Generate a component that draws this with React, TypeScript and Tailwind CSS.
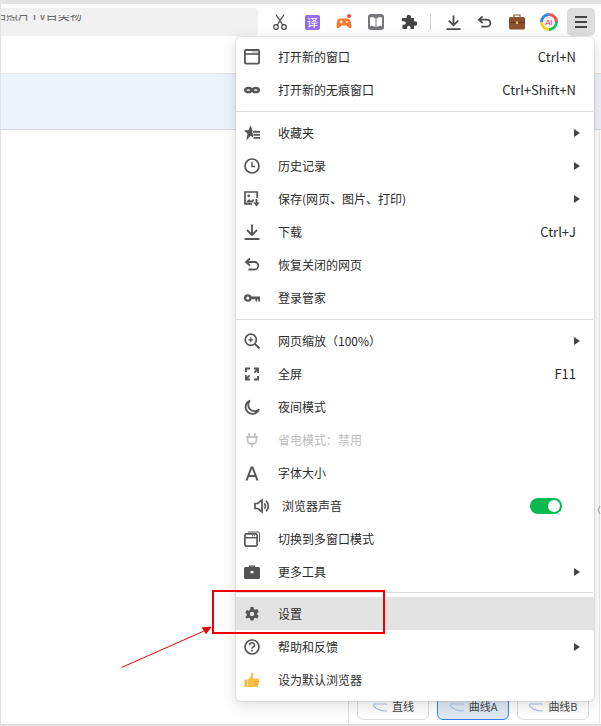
import { FC, ReactNode } from 'react';

const C = '#555555';

const WindowIcon = () => (
  <svg width="16" height="16" viewBox="0 0 16 16" fill="none">
    <rect x="0.900" y="1" width="14.200" height="13.600" rx="1" stroke={C} strokeWidth="1.800" />
    <path d="M1 5h14" stroke={C} strokeWidth="1.600" />
    <path d="M8.500 3h1M10.500 3h1M12.500 3h1" stroke={C} strokeWidth="1" />
  </svg>
);
const MaskIcon = () => (
  <svg width="16" height="16" viewBox="0 0 16 16" fill="none" stroke={C} strokeWidth="2.500">
    <ellipse cx="4.300" cy="8" rx="3" ry="2.100" />
    <ellipse cx="11.700" cy="8" rx="3" ry="2.100" />
  </svg>
);
const StarListIcon = () => (
  <svg width="16" height="16" viewBox="0 0 16 16" fill={C}>
    <path d="M6.500 0.300L8.400 5 13.300 5.300 9.500 8.500 10.700 13.500 6.500 10.800 2.300 15.500 3.500 8.700 0 5.500 4.600 5z" />
    <path d="M8.300 5.300H16v3H8.300zM9 8.300h7v3H9zM9 11.300h7v3H9z" fill="#ffffff" />
    <path d="M9 6h7v1.700H9zM9.500 9H16v1.700H9.500zM9.500 12H16v1.700H9.500z" />
  </svg>
);
const ClockIcon = () => (
  <svg width="16" height="16" viewBox="0 0 16 16" fill="none" stroke={C}>
    <circle cx="8" cy="8" r="7" strokeWidth="1.700" />
    <path d="M8 3.800V8.500H11.200" strokeWidth="1.400" />
  </svg>
);
const SaveImageIcon = () => (
  <svg width="16" height="16" viewBox="0 0 16 16" fill="none">
    <path d="M8 12.800H1V1h12.200v6" stroke={C} strokeWidth="1.700" />
    <path d="M2 11.500l3-3.500 2 2 2-2 1 1-1 2.500H2z" fill={C} />
    <circle cx="4.700" cy="4.800" r="1.400" fill={C} />
    <path d="M12.500 8v4.500" stroke={C} strokeWidth="1.900" />
    <path d="M9.300 11.500h6.400L12.500 15.500z" fill={C} />
  </svg>
);
const DownloadIcon = () => (
  <svg width="16" height="16" viewBox="0 0 16 16" fill="none" stroke={C} strokeWidth="1.800">
    <path d="M8 0.500v10M3 6l5 5 5-5M0.500 15h15" />
  </svg>
);
const UndoIcon = () => (
  <svg width="16" height="16" viewBox="0 0 16 16" fill="none" stroke={C} strokeWidth="1.800">
    <path d="M6 1.500L2 5l4 3.500M2 5h8.500a3.700 3.700 0 010 7.500H4.500" />
  </svg>
);
const KeyIcon = () => (
  <svg width="16" height="16" viewBox="0 0 16 16" fill="none">
    <circle cx="3.800" cy="8" r="2.700" stroke={C} strokeWidth="2.300" />
    <path d="M6.500 6.400H16v5h-1.800V9.300h-1v2.100h-1.700V9.300H6.500z" fill={C} />
  </svg>
);
const ZoomIcon = () => (
  <svg width="16" height="16" viewBox="0 0 16 16" fill="none" stroke={C}>
    <circle cx="6.800" cy="6.800" r="5.600" strokeWidth="1.700" />
    <path d="M11 11l4.500 4.500" strokeWidth="2" />
    <path d="M4.300 6.800h5M6.800 4.300v5" strokeWidth="1.300" />
  </svg>
);
const FullscreenIcon = () => (
  <svg width="16" height="16" viewBox="0 0 16 16" fill={C}>
    <path d="M1 1.500h5v2H3V6H1zM15 1.500V7h-1.800V5L11 7.200 9.700 6l2.300-2.500h-2v-2zM1 14.500V9h1.800v2L5 8.800 6.300 10 4 12.500h2v2zM13 10h2v4.500h-5v-2h3z" />
  </svg>
);
const MoonIcon = () => (
  <svg width="16" height="16" viewBox="0 0 16 16" fill="none" stroke={C} strokeWidth="1.800">
    <path d="M6 1.500A6.900 6.900 0 1015 10.300 6.200 6.200 0 016 1.500z" />
  </svg>
);
const PlugIcon = () => (
  <svg width="16" height="16" viewBox="0 0 16 16" fill="none" stroke="#c4c4c4" strokeWidth="1.800">
    <path d="M5 1v4M11 1v4M2 5h12M3.500 5v3.300a4 4 0 004 3.500h1a4 4 0 004-3.500V5M8 12v3.500" />
  </svg>
);
const FontIcon = () => (
  <svg width="16" height="16" viewBox="0 0 16 16" fill={C}>
    <path d="M6.800 1.500h2.400L14.500 15.500h-2.200l-1.200-3.500H4.900l-1.200 3.500H1.500zM5.600 10h4.800L8 3.800z" />
  </svg>
);
const SoundIcon = () => (
  <svg width="16" height="16" viewBox="0 0 16 16" fill="none" stroke={C} strokeWidth="1.700">
    <path d="M1 5.500h2.700L8 2v12l-4.300-3.500H1z" />
    <path d="M10.300 5.300a3.600 3.600 0 010 5.400M12 2.800a7 7 0 010 10.400" />
  </svg>
);
const MultiWindowIcon = () => (
  <svg width="16" height="16" viewBox="0 0 16 16" fill="none" stroke={C}>
    <rect x="0.900" y="2.900" width="12.200" height="12.200" rx="1.500" strokeWidth="1.700" />
    <path d="M1 6.700h12" strokeWidth="1.400" />
    <path d="M4 1h10a1.500 1.500 0 011.500 1.500V11" strokeWidth="1" />
    <path d="M8 4.800h1M10 4.800h1" strokeWidth="1" />
  </svg>
);
const BriefcaseIcon = () => (
  <svg width="16" height="16" viewBox="0 0 16 16" fill={C}>
    <path
      fillRule="evenodd"
      d="M5 3V1.500h6V3h3.500c.8 0 1.500.7 1.500 1.500V13.500c0 .8-.7 1.500-1.500 1.500h-13C.7 15 0 14.300 0 13.500V4.500C0 3.700.7 3 1.500 3zM6.500 3h3V2.700h-3zM6.500 7v2.200h3V7z"
    />
  </svg>
);
const GearIcon = () => (
  <svg width="16" height="16" viewBox="0 0 16 16" fill={C}>
    <path
      fillRule="evenodd"
      d="M6.500 1h3l.4 2 1.300.8 2-.7 1.500 2.600-1.500 1.300v1.600l1.500 1.300-1.500 2.600-2-.7-1.300.8-.4 2h-3l-.4-2-1.300-.8-2 .7L1.300 10.900l1.500-1.300V8l-1.500-1.300 1.500-2.600 2 .7 1.300-.8zM8 5.800a2.200 2.200 0 100 4.400 2.200 2.200 0 000-4.400z"
    />
  </svg>
);
const HelpIcon = () => (
  <svg width="16" height="16" viewBox="0 0 16 16" fill="none" stroke={C}>
    <circle cx="8" cy="8" r="7" strokeWidth="1.700" />
    <path d="M5.500 6.300a2.500 2.500 0 115 0c0 1.500-2.500 1.800-2.500 3.500" strokeWidth="1.600" />
    <path d="M8 10.800v1.800" strokeWidth="1.700" />
  </svg>
);
const ThumbIcon = () => (
  <svg width="16" height="16" viewBox="0 0 16 16">
    <path d="M0.500 7.500h3v7.500h-3z" fill="#f5b83d" />
    <path d="M4 7.500l3-3.500.500-3.500c1.700 0 2 1.500 1.800 3L9 6.500h5c1 0 1.500 1 1.200 1.800L14 14c-.2.700-.8 1-1.500 1H4z" fill="#f7c04a" />
    <path d="M10 9.500h5M10 12h4.500" stroke="#e09a20" strokeWidth="0.800" />
  </svg>
);

const Arrow = () => (
  <span className="h-0 w-0 border-y-[4px] border-l-[6px] border-y-transparent border-l-[#444444]" />
);

const MenuItem: FC<{
  icon: ReactNode;
  label: string;
  shortcut?: string;
  arrow?: boolean;
  disabled?: boolean;
  active?: boolean;
  indent?: boolean;
  right?: ReactNode;
}> = ({ icon, label, shortcut, arrow, disabled, active, indent, right }) => (
  <div
    className={`flex h-[33px] items-center pl-2 pr-[14px] text-[12px] ${active ? 'bg-[#e3e3e3]' : ''} ${
      disabled ? 'text-[#bdbdbd]' : 'text-[#2b2b2b]'
    }`}
  >
    <span className={`flex w-[16px] shrink-0 justify-center ${indent ? 'ml-[10px]' : ''}`}>{icon}</span>
    <span className={`flex-1 ${indent ? 'ml-[12px]' : 'ml-[18px]'}`}>{label}</span>
    {shortcut && <span className="mr-[4px] text-[13px] text-[#2b2b2b]">{shortcut}</span>}
    {arrow && <Arrow />}
    {right}
  </div>
);

const Menu = () => (
  <div className="absolute left-[236px] top-[37px] w-[358px] rounded-[5px] bg-white pb-[5px] pt-[3px] shadow-[0_0_0_1px_rgba(0,0,0,0.08),0_4px_16px_rgba(0,0,0,0.14)]">
    <MenuItem icon={<WindowIcon />} label="打开新的窗口" shortcut="Ctrl+N" />
    <MenuItem icon={<MaskIcon />} label="打开新的无痕窗口" shortcut="Ctrl+Shift+N" />
    <div className="mb-[4px] mr-[1px] mt-[5px] h-px bg-[#dcdcdc]" />
    <MenuItem icon={<StarListIcon />} label="收藏夹" arrow />
    <MenuItem icon={<ClockIcon />} label="历史记录" arrow />
    <MenuItem icon={<SaveImageIcon />} label="保存(网页、图片、打印)" arrow />
    <MenuItem icon={<DownloadIcon />} label="下载" shortcut="Ctrl+J" />
    <MenuItem icon={<UndoIcon />} label="恢复关闭的网页" />
    <MenuItem icon={<KeyIcon />} label="登录管家" />
    <div className="mb-[4px] mr-[1px] mt-[5px] h-px bg-[#dcdcdc]" />
    <MenuItem icon={<ZoomIcon />} label="网页缩放（100%）" arrow />
    <MenuItem icon={<FullscreenIcon />} label="全屏" shortcut="F11" />
    <MenuItem icon={<MoonIcon />} label="夜间模式" />
    <MenuItem icon={<PlugIcon />} label="省电模式：禁用" disabled />
    <MenuItem icon={<FontIcon />} label="字体大小" />
    <MenuItem
      indent
      icon={<SoundIcon />}
      label="浏览器声音"
      right={
        <span className="mr-[18px] flex h-4 w-8 items-center justify-end rounded-full bg-[#0bb951] pr-[2px]">
          <span className="h-3 w-3 rounded-full bg-white" />
        </span>
      }
    />
    <MenuItem icon={<MultiWindowIcon />} label="切换到多窗口模式" />
    <MenuItem icon={<BriefcaseIcon />} label="更多工具" arrow />
    <div className="my-[4px] mr-[1px] h-px bg-[#dcdcdc]" />
    <MenuItem icon={<GearIcon />} label="设置" active />
    <MenuItem icon={<HelpIcon />} label="帮助和反馈" arrow />
    <MenuItem icon={<ThumbIcon />} label="设为默认浏览器" />
  </div>
);

const Toolbar = () => (
  <div className="mt-[4px] flex h-[28px] items-center">
    {/* address bar: only the lower half of its text shows in the capture */}
    <div className="h-[28px] w-[258px] shrink-0 overflow-hidden rounded-r-[4px] bg-[#f1f1f1] pt-[7px]">
      <div className="h-[6px] overflow-hidden">
        <div className="-ml-[6px] -mt-[6px] whitespace-nowrap text-[12px] leading-[12px] text-[#666666]">
          拍照片 I V目类物
        </div>
      </div>
    </div>
    <svg className="ml-[15px]" width="14" height="16" viewBox="0 0 14 16" fill="none" stroke="#444444" strokeWidth="1.200">
      <circle cx="3" cy="13" r="2.300" />
      <circle cx="11" cy="13" r="2.300" />
      <path d="M4.300 11L11 0.500M9.700 11L3 0.500" />
    </svg>
    <span className="ml-[18px] flex h-[15px] w-[15px] items-center justify-center rounded-[2px] bg-[#9a6cf0] text-[11px] leading-none text-white">
      译
    </span>
    <svg className="ml-[16px]" width="16" height="16" viewBox="0 0 16 16">
      <path d="M3.500 4.500h8c2 0 3.700 3.500 4 7 .2 2.500-1.500 3.500-3 2L10.500 11.500h-5l-2 2c-1.500 1.500-3.200.5-3-2 .3-3.500 1-7 3-7z" fill="#f4792b" />
      <path d="M3.500 8h3.500M5.250 6.200v3.600" stroke="#fff" strokeWidth="1.100" />
      <circle cx="10.800" cy="8" r="1" fill="#fff" />
      <circle cx="13" cy="2" r="2" fill="#f0463c" />
    </svg>
    <span className="ml-[16px] flex h-4 w-4 items-center justify-center rounded-[3px] bg-[#77787c]">
      <svg width="12" height="10" viewBox="0 0 12 10" fill="#fff">
        <path d="M0 0.500c2-.5 4-.3 5.500 1V10C4 9 2 8.800 0 9zM12 0.500c-2-.5-4-.3-5.500 1V10C8 9 10 8.800 12 9z" />
      </svg>
    </span>
    <svg className="ml-[17px]" width="16" height="16" viewBox="0 0 16 16" fill="#444444">
      <path d="M5.500 2.500a2.300 2.300 0 014.500 0V4h3v3.200h1a2.300 2.300 0 010 4.600h-1V15H9.500v-1.500a1.700 1.700 0 00-3.400 0V15H1.500v-4.200H3a1.800 1.800 0 000-3.600H1V4h4.500z" />
    </svg>
    <span className="ml-[13px] h-4 w-px bg-[#cfcfcf]" />
    <svg className="ml-[15px]" width="15" height="15" viewBox="0 0 16 16" fill="none" stroke="#4a4a4a" strokeWidth="1.900">
      <path d="M8 0.500v10M3 6l5 5 5-5M0.500 15h15" />
    </svg>
    <svg className="ml-[16px]" width="15" height="15" viewBox="0 0 16 16" fill="none" stroke="#4a4a4a" strokeWidth="1.900">
      <path d="M6 1.500L2 5l4 3.500M2 5h8.500a3.700 3.700 0 010 7.500H4.500" />
    </svg>
    <svg className="ml-[17px]" width="16" height="16" viewBox="0 0 16 16">
      <path d="M5 3.500V1h6v2.500" fill="none" stroke="#8a5a35" strokeWidth="1.200" />
      <rect x="0" y="3" width="16" height="12.500" rx="1.500" fill="#8a5230" />
      <path d="M0 8.500h16" stroke="#5e3519" strokeWidth="1" />
      <rect x="7" y="7.500" width="2" height="2.500" fill="#e9c46a" />
    </svg>
    <svg className="ml-[15px]" width="18" height="18" viewBox="0 0 18 18" fill="none">
      <path d="M9 1.500a7.500 7.500 0 017.500 7.500" stroke="#f6504a" strokeWidth="3" />
      <path d="M16.500 9A7.500 7.500 0 019 16.500" stroke="#13c26b" strokeWidth="3" />
      <path d="M9 16.500A7.500 7.500 0 011.500 9" stroke="#f7d21e" strokeWidth="3" />
      <path d="M1.500 9A7.500 7.500 0 019 1.500" stroke="#2a8cf0" strokeWidth="3" />
      <circle cx="9" cy="9" r="5.500" fill="#fdeef5" />
      <text x="9" y="11.800" textAnchor="middle" fontSize="8" fill="#f0318c" fontFamily="'Liberation Sans', sans-serif">
        AI
      </text>
    </svg>
    <span className="ml-[9px] flex h-[28px] w-[28px] flex-col items-center justify-center gap-[3px] rounded-[5px] bg-[#dddddd]">
      <span className="h-[2px] w-3 bg-[#444444]" />
      <span className="h-[2px] w-3 bg-[#444444]" />
      <span className="h-[2px] w-3 bg-[#444444]" />
    </span>
  </div>
);

const TabBtn: FC<{ label: string; active?: boolean }> = ({ label, active }) => (
  <div
    className={`flex h-[34px] w-[72px] items-end justify-center gap-1 rounded-[6px] border pb-[6px] text-[11px] leading-[14px] text-[#444444] ${
      active ? 'border-[#3a7cea] bg-[#dfeaf6]' : 'border-[#dddddd] bg-white'
    }`}
  >
    <svg width="16" height="12" viewBox="0 0 16 12" fill="none">
      <path d="M1 3h14M1 4c3 5 8 6 14 6" stroke="#a9c2e6" strokeWidth="1.200" />
    </svg>
    {label}
  </div>
);

export default function App() {
  return (
    <div className="relative h-[726px] w-[601px] overflow-hidden bg-white font-['Noto_Sans_CJK_SC',sans-serif]">
      <div className="h-[4px] bg-[#e2e2e2]" />
      <Toolbar />
      <div className="mt-[37px] h-[57px] border-y border-t-[#e2e2e2] border-b-[#dcdcdc] bg-[#ecf3fb]" />

      {/* bottom panel behind the menu */}
      <div className="absolute bottom-[2px] left-[348px] right-0 flex h-[40px] items-end gap-[8px] border-l border-[#dddddd] pb-[4px] pl-[8px]">
        <TabBtn label="直线" />
        <TabBtn label="曲线A" active />
        <TabBtn label="曲线B" />
      </div>
      <div className="absolute bottom-0 left-0 right-0 h-[2px] bg-[#e0e0e0]" />
      <div className="absolute bottom-0 left-0 top-[4px] w-px bg-[#e2e2e2]" />
      <div className="absolute bottom-0 right-[1px] top-[130px] w-px bg-[#e8e8e8]" />
      <svg className="absolute right-0 top-[505px]" width="4" height="10" viewBox="0 0 4 10" fill="none">
        <path d="M3 1L1 5l2 4" stroke="#999999" strokeWidth="1" />
      </svg>

      <Menu />

      {/* annotation */}
      <div className="absolute left-[212px] top-[590px] h-[44px] w-[173px] border-[2px] border-[#f00000]" />
      <svg className="absolute left-[120px] top-[625px]" width="96" height="44" viewBox="0 0 96 44">
        <path d="M1.500 42.500L84 6" stroke="#f00000" strokeWidth="1" />
        <path d="M81.700 2.300L91.700 1.700 86 9.300z" fill="#f00000" />
      </svg>
    </div>
  );
}
